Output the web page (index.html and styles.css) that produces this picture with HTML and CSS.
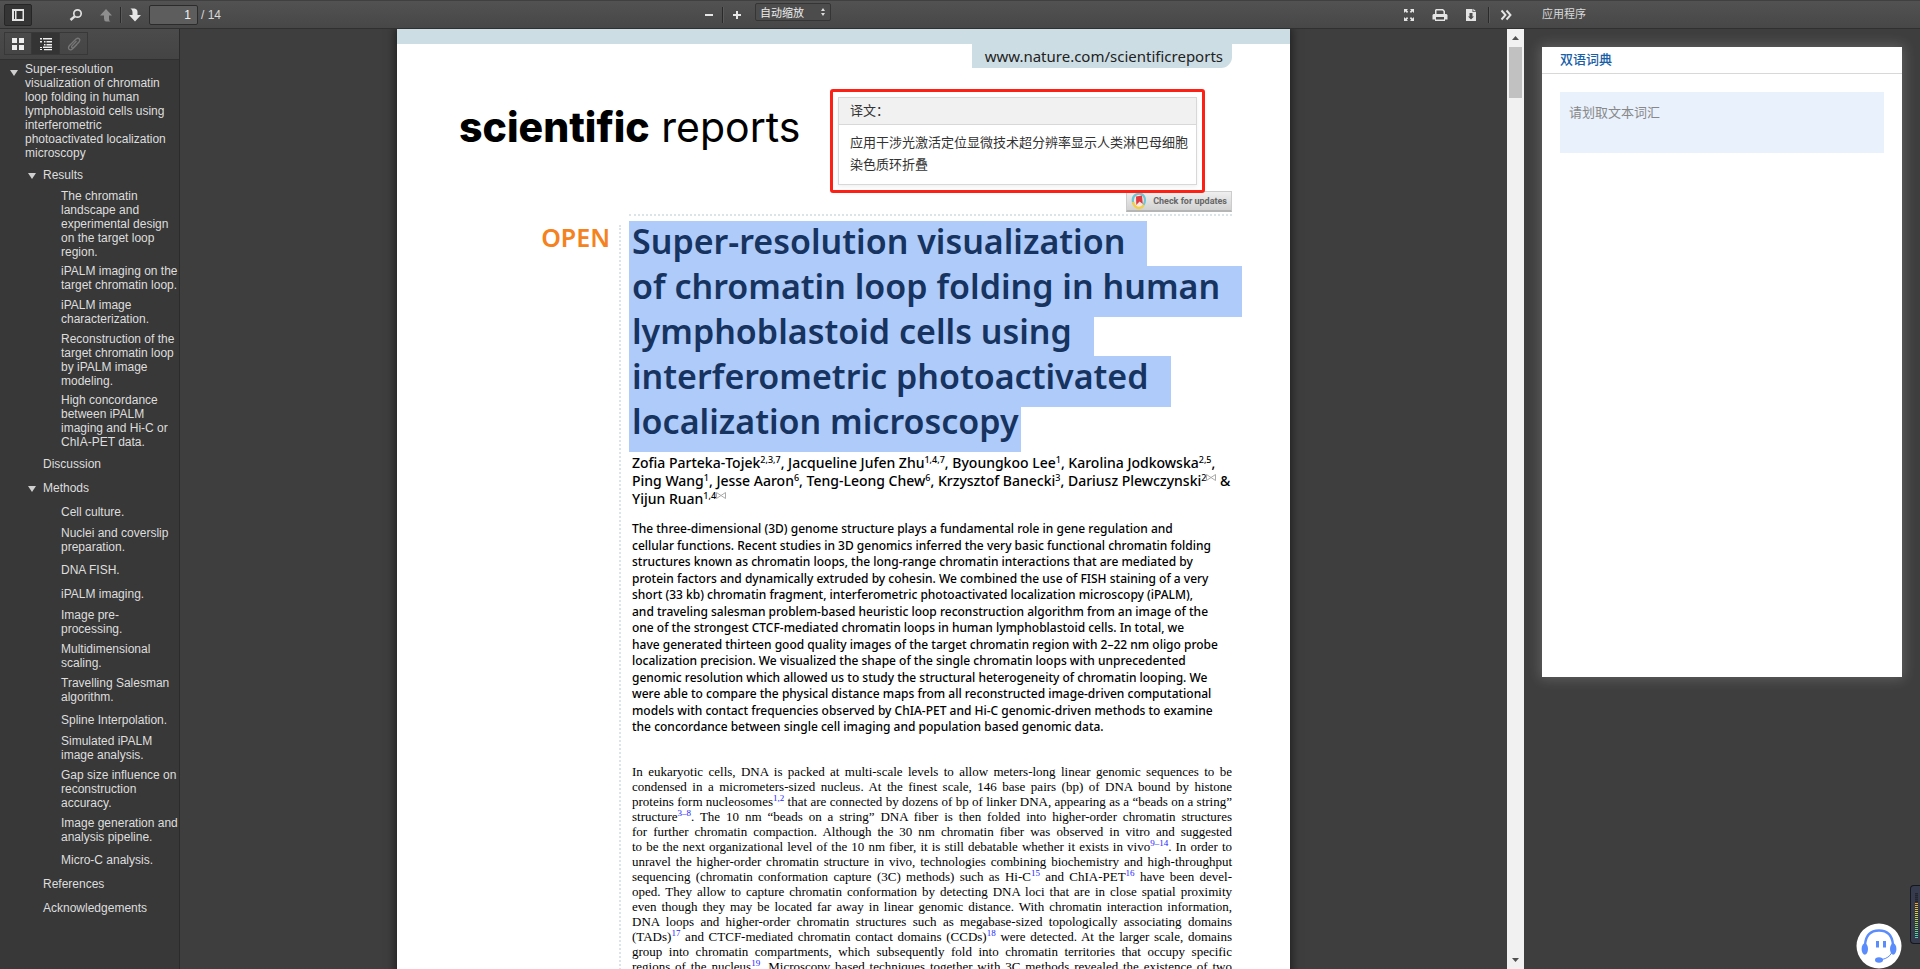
FILE: index.html
```html
<!DOCTYPE html>
<html lang="zh-CN">
<head>
<meta charset="utf-8">
<title>Super-resolution visualization of chromatin loop folding</title>
<link rel="stylesheet" href="styles.css">
</head>
<body>
<div class="app">
  <div class="reader">
    <header class="toolbar">
      <div class="group">
        <button class="btn btn-toggled" aria-label="Toggle sidebar"><svg width="14" height="14" viewBox="0 0 14 14"><path fill="#e4e4e4" fill-rule="evenodd" d="M1 1h12v12H1zM3 3v8h1V3zM5.500 3v8H11.500V3z"/></svg></button>
        <button class="btn btn-find" aria-label="Find"><svg width="14" height="14" viewBox="0 0 14 14"><circle cx="8.500" cy="5.500" r="3.700" fill="none" stroke="#e0e0e0" stroke-width="1.700"/><path d="M5.700 8.300L1.500 12" stroke="#e0e0e0" stroke-width="2.400"/></svg></button>
        <button class="btn" aria-label="Previous page"><svg width="14" height="14" viewBox="0 0 14 14"><path fill="#8e8e8e" d="M7 1l6 6.500H10V11q0 2 1.500 2.500H7Q5 13 5 10.500V7.500H1z"/></svg></button>
        <span class="sep"></span>
        <button class="btn" aria-label="Next page"><svg width="14" height="14" viewBox="0 0 14 14"><path fill="#e6e6e6" d="M7 13.500L1 7H4.500V4Q4.500 1.500 2.500 .5H6.500Q9.500 1 9.500 4V7H13z"/></svg></button>
        <label class="pages"><input class="page-input" type="text" value="1" aria-label="Page"> <span>/ 14</span></label>
      </div>
      <div class="group group-mid">
        <button class="btn btn-zoom" aria-label="Zoom out"><svg width="10" height="10" viewBox="0 0 10 10"><path fill="#e6e6e6" d="M1 4h8v2H1z"/></svg></button>
        <span class="sep"></span>
        <button class="btn btn-zoom" aria-label="Zoom in"><svg width="10" height="10" viewBox="0 0 10 10"><path fill="#e6e6e6" d="M1 4h3V1h2v3h3v2H6v3H4V6H1z"/></svg></button>
        <div class="select-wrap">
          <select class="scale" aria-label="Zoom"><option>自动缩放</option></select>
          <svg class="scale-arrow" width="6" height="10" viewBox="0 0 6 10"><path fill="#ddd" d="M3 1l2 3H1zM3 9L1 6h4z"/></svg>
        </div>
      </div>
      <div class="group group-end">
        <button class="btn" aria-label="Full screen"><svg width="12" height="14" viewBox="0 0 12 14"><path fill="#e4e4e4" d="M1 1h4L3.800 2.300 5.200 3.700 4 5 2.500 3.500 1 5zM11 1v4L9.500 3.500 8 5 6.800 3.700 8.200 2.300 7 1zM1 13V9l1.500 1.500L4 9l1.200 1.300L3.800 11.700 5 13zM11 13H7l1.200-1.300-1.400-1.400L8 9l1.500 1.500L11 9z"/></svg></button>
        <button class="btn" aria-label="Print"><svg width="16" height="14" viewBox="0 0 16 14"><path fill="#e4e4e4" fill-rule="evenodd" d="M4 1h7l2 2v3h1.500l1 1v4.500H13V13H3v-1.500H.5V7l1-1H3V2zM4.500 2.500V6h7V3.500l-1-1zM4 9v2.500h8V9z"/></svg></button>
        <button class="btn" aria-label="Download"><svg width="12" height="14" viewBox="0 0 12 14"><path fill="#e4e4e4" fill-rule="evenodd" d="M1 1h6.500v3H11v9H1zM4.500 5v3.500H3L6 11.500 9 8.500H7.500V5z"/><path fill="#e4e4e4" d="M8.300 .8L11 3.300H8.300z"/></svg></button>
        <span class="sep"></span>
        <button class="btn" aria-label="Tools"><svg width="13" height="12" viewBox="0 0 13 12"><path fill="none" stroke="#e4e4e4" stroke-width="1.900" d="M1.500 1.500L5.500 6l-4 4.500M6.500 1.500l4 4.500-4 4.500"/></svg></button>
      </div>
    </header>

    <div class="workspace">
      <aside class="sidebar">
        <div class="side-tools">
          <button class="tab" aria-label="Thumbnails"><svg width="14" height="14" viewBox="0 0 14 14"><path fill="#eee" d="M1 1h5v5H1zM8 1h5v5H8zM1 8h5v5H1zM8 8h5v5H8z"/></svg></button>
          <button class="tab tab-on" aria-label="Outline"><svg width="14" height="14" viewBox="0 0 14 14"><path fill="#eee" d="M1 1h2v1.500H1zM4 1h9v1.500H4zM1 4h2v1.500H1zM5 4h1.500v1.500H5zM7.500 4H13v1.500H7.500zM5 7h1.500v1.500H5zM7.500 7H13v1.500H7.500zM1 10h2v1H1zM4 9.500h9V11H4zM1 12h2v1H1zM5 12h8v1.200H5z"/></svg></button>
          <button class="tab" aria-label="Attachments"><svg width="14" height="14" viewBox="0 0 14 14"><path fill="none" stroke="#777" stroke-width="1.300" d="M9.500 4L5 8.800q-1 1.400.2 2 .9.300 1.700-.6L12 5q1.500-2 .2-3.200T9 2L2.500 8.500q-1.800 2.300-.4 3.800 1.600 1.300 3.600-.6L10 7.500"/></svg></button>
        </div>
        <nav class="outline">
          <ul class="tree">
            <li><a class="node long open" href="#">Super-resolution<br>visualization of chromatin<br>loop folding in human<br>lymphoblastoid cells using<br>interferometric<br>photoactivated localization<br>microscopy</a>
              <ul>
                <li><a class="node one open" href="#">Results</a>
                  <ul>
                    <li><a class="node long" href="#">The chromatin<br>landscape and<br>experimental design<br>on the target loop<br>region.</a></li>
                    <li><a class="node" href="#">iPALM imaging on the<br>target chromatin loop.</a></li>
                    <li><a class="node" href="#">iPALM image<br>characterization.</a></li>
                    <li><a class="node long" href="#">Reconstruction of the<br>target chromatin loop<br>by iPALM image<br>modeling.</a></li>
                    <li><a class="node long" href="#">High concordance<br>between iPALM<br>imaging and Hi-C or<br>ChIA-PET data.</a></li>
                  </ul>
                </li>
                <li><a class="node one" href="#">Discussion</a></li>
                <li><a class="node one open" href="#">Methods</a>
                  <ul>
                    <li><a class="node one" href="#">Cell culture.</a></li>
                    <li><a class="node" href="#">Nuclei and coverslip<br>preparation.</a></li>
                    <li><a class="node one" href="#">DNA FISH.</a></li>
                    <li><a class="node one" href="#">iPALM imaging.</a></li>
                    <li><a class="node" href="#">Image pre-<br>processing.</a></li>
                    <li><a class="node" href="#">Multidimensional<br>scaling.</a></li>
                    <li><a class="node" href="#">Travelling Salesman<br>algorithm.</a></li>
                    <li><a class="node one" href="#">Spline Interpolation.</a></li>
                    <li><a class="node" href="#">Simulated iPALM<br>image analysis.</a></li>
                    <li><a class="node" href="#">Gap size influence on<br>reconstruction<br>accuracy.</a></li>
                    <li><a class="node" href="#">Image generation and<br>analysis pipeline.</a></li>
                    <li><a class="node one" href="#">Micro-C analysis.</a></li>
                  </ul>
                </li>
                <li><a class="node one" href="#">References</a></li>
                <li><a class="node one" href="#">Acknowledgements</a></li>
              </ul>
            </li>
          </ul>
        </nav>
      </aside>

      <main class="viewer">
        <article class="page" lang="en">
          <div class="band"></div>
          <div class="site"><a href="#">www.nature.com/scientificreports</a></div>
          <div class="brand"><b>scientific</b> reports</div>
          <div class="badge-row">
            <button class="badge"><svg width="16" height="18" viewBox="0 0 16 18"><ellipse cx="8" cy="9" rx="6.300" ry="7.300" fill="#f6e7e2"/><path fill="none" stroke="#6cc6d6" stroke-width="2.200" d="M2.300 11.500Q.5 5 5 2.500q6-2.500 8.500 3 1.200 4-1 7.500"/><path fill="none" stroke="#f3cf45" stroke-width="2.400" d="M2 10q1.500 6 6 6 3 0 4.800-3"/><path fill="#e0383e" d="M5 4.500l6-1 .8 8.500L8.500 9.500 5.300 13z"/></svg>Check for updates</button>
          </div>
          <div class="columns">
            <div class="access">OPEN</div>
            <div class="text">
              <h1 class="title"><span>Super-resolution visualization</span><span>of chromatin loop folding in human</span><span>lymphoblastoid cells using</span><span>interferometric photoactivated</span><span>localization microscopy</span></h1>
              <p class="authors">Zofia Parteka‑Tojek<sup>2,3,7</sup>, Jacqueline Jufen Zhu<sup>1,4,7</sup>, Byoungkoo Lee<sup>1</sup>, Karolina Jodkowska<sup>2,5</sup>,<br>Ping Wang<sup>1</sup>, Jesse Aaron<sup>6</sup>, Teng‑Leong Chew<sup>6</sup>, Krzysztof Banecki<sup>3</sup>, Dariusz Plewczynski<sup>2</sup><svg class="mail" width="10" height="7" viewBox="0 0 10 7"><path fill="none" stroke="#aaa" d="M.5.5v6L5 3.500 9.500.5v6L5 3.500z"/></svg> &amp;<br>Yijun Ruan<sup>1,4</sup><svg class="mail" width="10" height="7" viewBox="0 0 10 7"><path fill="none" stroke="#aaa" d="M.5.5v6L5 3.500 9.500.5v6L5 3.500z"/></svg></p>
              <p class="abstract"><span>The three‑dimensional (3D) genome structure plays a fundamental role in gene regulation and</span><span>cellular functions. Recent studies in 3D genomics inferred the very basic functional chromatin folding</span><span>structures known as chromatin loops, the long‑range chromatin interactions that are mediated by</span><span>protein factors and dynamically extruded by cohesin. We combined the use of FISH staining of a very</span><span>short (33 kb) chromatin fragment, interferometric photoactivated localization microscopy (iPALM),</span><span>and traveling salesman problem‑based heuristic loop reconstruction algorithm from an image of the</span><span>one of the strongest CTCF‑mediated chromatin loops in human lymphoblastoid cells. In total, we</span><span>have generated thirteen good quality images of the target chromatin region with 2–22 nm oligo probe</span><span>localization precision. We visualized the shape of the single chromatin loops with unprecedented</span><span>genomic resolution which allowed us to study the structural heterogeneity of chromatin looping. We</span><span>were able to compare the physical distance maps from all reconstructed image‑driven computational</span><span>models with contact frequencies observed by ChIA‑PET and Hi‑C genomic‑driven methods to examine</span><span>the concordance between single cell imaging and population based genomic data.</span></p>
              <p class="body">In eukaryotic cells, DNA is packed at multi-scale levels to allow meters-long linear genomic sequences to be<br>condensed in a micrometers-sized nucleus. At the finest scale, 146 base pairs (bp) of DNA bound by histone<br>proteins form nucleosomes<sup>1,2</sup> that are connected by dozens of bp of linker DNA, appearing as a “beads on a string”<br>structure<sup>3–8</sup>. The 10 nm “beads on a string” DNA fiber is then folded into higher-order chromatin structures<br>for further chromatin compaction. Although the 30 nm chromatin fiber was observed in vitro and suggested<br>to be the next organizational level of the 10 nm fiber, it is still debatable whether it exists in vivo<sup>9–14</sup>. In order to<br>unravel the higher-order chromatin structure in vivo, technologies combining biochemistry and high-throughput<br>sequencing (chromatin conformation capture (3C) methods) such as Hi-C<sup>15</sup> and ChIA-PET<sup>16</sup> have been devel-<br>oped. They allow to capture chromatin conformation by detecting DNA loci that are in close spatial proximity<br>even though they may be located far away in linear genomic distance. With chromatin interaction information,<br>DNA loops and higher-order chromatin structures such as megabase-sized topologically associating domains<br>(TADs)<sup>17</sup> and CTCF-mediated chromatin contact domains (CCDs)<sup>18</sup> were detected. At the larger scale, domains<br>group into chromatin compartments, which subsequently fold into chromatin territories that occupy specific<br>regions of the nucleus<sup>19</sup>. Microscopy based techniques together with 3C methods revealed the existence of two</p>
            </div>
          </div>
          <section class="translation" lang="zh-CN">
            <div class="translation-card">
              <h2>译文：</h2>
              <p>应用干涉光激活定位显微技术超分辨率显示人类淋巴母细胞<br>染色质环折叠</p>
            </div>
          </section>
        </article>
        <div class="scrollbar">
          <svg width="17" height="18" viewBox="0 0 17 18"><path fill="#505050" d="M5 11h7L8.500 7z"/></svg>
          <div class="thumb"></div>
          <svg class="down" width="17" height="18" viewBox="0 0 17 18"><path fill="#505050" d="M5 7h7l-3.500 4z"/></svg>
        </div>
      </main>
    </div>
  </div>

  <aside class="tools">
    <header class="tools-head">应用程序</header>
    <section class="card">
      <h2>双语词典</h2>
      <div class="hint">请划取文本词汇</div>
    </section>
  </aside>
</div>

<button class="chat" aria-label="Support"><svg width="46" height="46" viewBox="0 0 46 46"><circle cx="23" cy="23" r="22.500" fill="#fff"/><path fill="none" stroke="#5b8cfb" stroke-width="2.400" d="M9 22Q10 7.500 23 7.500T37 22"/><ellipse cx="8.800" cy="26" rx="3.200" ry="5.800" fill="#5b8cfb"/><ellipse cx="37.200" cy="26" rx="3.200" ry="5.800" fill="#5b8cfb"/><path fill="#5b8cfb" d="M20 18h3v6.500h-3zM27 18h3v6.500h-3z"/><ellipse cx="23" cy="37" rx="4" ry="2.700" fill="#5b8cfb"/><path fill="none" stroke="#5b8cfb" d="M26 36.500Q33 35 35.500 30"/></svg></button>
<div class="meter"><div class="level"></div></div>
</body>
</html>
```
FILE: styles.css
```css
* { box-sizing: border-box; }
body {
  margin: 0;
  height: 100vh;
  overflow: hidden;
  background: #3e3e3e;
  font-family: "Liberation Sans", "Noto Sans CJK SC", sans-serif;
}
h1, h2, p, ul { margin: 0; padding: 0; }
button { margin: 0; padding: 0; border: 0; background: none; font: inherit; color: inherit; }
a { color: inherit; text-decoration: none; }
svg { display: block; flex: none; }

.app { display: flex; height: 100vh; }
.reader { flex: 1; min-width: 0; display: flex; flex-direction: column; }

/* top bar */
.toolbar {
  display: grid;
  grid-template-columns: 1fr auto 1fr;
  height: 29px;
  background: linear-gradient(#525252, #474747);
  border-top: 1px solid #404040;
  border-bottom: 1px solid #303030;
  position: relative;
}
.group { display: flex; align-items: center; padding-left: 4px; }
.group-mid { padding-left: 2px; }
.group-end { justify-content: flex-end; padding: 0 4px 0 0; gap: 3px; }
.btn { display: flex; align-items: center; justify-content: center; width: 28px; height: 22px; }
.btn-zoom { width: 27px; }
.btn-toggled { background: #353535; border: 1px solid #262626; border-radius: 2px; }
.btn-find { margin: 0 2px 0 30px; }
.sep { width: 1px; height: 16px; background: #2a2a2a; box-shadow: 1px 0 #5a5a5a; }
.pages { display: flex; align-items: center; gap: 3px; color: #d9d9d9; font: 12px "Liberation Sans", sans-serif; }
.page-input {
  width: 49px; height: 20px;
  padding: 0 6px;
  border: 1px solid #2b2b2b;
  border-radius: 2px;
  background: #5d5d5d;
  color: #f2f2f2;
  font: 12px "Liberation Sans", sans-serif;
  text-align: right;
}
.select-wrap { display: grid; align-items: center; margin: 0 0 6px 5px; }
.scale, .scale-arrow { grid-area: 1 / 1; }
.scale {
  appearance: none;
  width: 76px; height: 18px;
  padding: 0 4px;
  border: 1px solid #353535;
  border-radius: 2px;
  background: #4c4c4c;
  color: #ececec;
  font: 11px/16px "Noto Sans CJK SC", sans-serif;
}
.scale-arrow { justify-self: end; margin-right: 5px; pointer-events: none; }

/* outline */
.workspace { flex: 1; min-height: 0; display: flex; }
.sidebar { width: 180px; flex: none; background: #383838; border-right: 1px solid #2b2b2b; overflow: hidden; }
.side-tools {
  display: flex;
  height: 31px;
  padding: 3px 4px;
  background: linear-gradient(#4b4b4b, #444);
  border-bottom: 1px solid #303030;
}
.tab { display: flex; align-items: center; justify-content: center; width: 28px; height: 23px; border: 1px solid #383838; }
.tab + .tab { border-left: 0; }
.tab-on { background: #343434; }
.outline { padding: 2px 0 0 8px; color: #dedede; font-size: 12px; line-height: 14px; white-space: nowrap; }
.outline ul { list-style: none; padding-left: 18px; }
.outline .tree { padding-left: 17px; }
.node { display: block; padding-bottom: 6px; position: relative; }
.node.long { padding-bottom: 5px; }
.node.one { padding: 3px 0 7px; }
.node.open::before {
  content: "";
  position: absolute;
  left: -15px; top: 8px;
  border: 4px solid transparent;
  border-top: 6px solid #cfcfcf;
  border-bottom: 0;
}

/* document */
.viewer { flex: 1; min-width: 0; display: flex; overflow: hidden; }
.page {
  flex: 0 1 893px;
  min-width: 0;
  margin: 0 auto;
  background: #fff;
  color: #000;
  position: relative;
  height: max-content;
  min-height: 100%;
  box-shadow: 0 0 9px 2px rgba(0, 0, 0, .5);
}
.band { height: 15px; background: #cddde4; }
.site { display: flex; justify-content: flex-end; padding-right: 58px; }
.site a {
  padding: 0 9px 0 13px;
  background: #cddde4;
  border-bottom-right-radius: 11px;
  color: #222;
  font: 15px/24px "Noto Sans", sans-serif;
}
.brand { padding: 35px 0 0 62px; font: 400 41px/48px Inter, sans-serif; }
.brand b { font-weight: 800; }
.badge-row { display: flex; justify-content: flex-end; padding: 40px 58px 0 0; }
.badge {
  display: flex; align-items: center; gap: 6px;
  height: 21px;
  padding: 0 4px;
  background: linear-gradient(#efefef, #d2d2d2);
  border: 1px solid #ccc;
  border-bottom: 2px solid #b5b5b5;
  color: #666;
  font: 700 9px Roboto, sans-serif;
}
.columns { display: flex; padding: 2px 58px 0 0; }
.access {
  flex: none;
  width: 224px;
  margin-top: 11px;
  padding-right: 9px;
  border-right: 2px dotted #dbe4e8;
  color: #f58220;
  font: 600 25px/24px "Noto Sans", sans-serif;
  text-align: right;
}
.text { flex: 1; min-width: 0; margin-left: 8px; }
.title {
  padding-top: 5px;
  border-top: 2px dotted #dbe4e8;
  color: #17335f;
  font: 600 34px/41px "Noto Sans", sans-serif;
  white-space: nowrap;
}
.title span { display: block; width: fit-content; margin-bottom: -6px; padding: 0 22px 10px 3px; background: #aecbfa; }
.title span:last-child { padding-right: 2px; }
.authors, .abstract, .body { margin-left: 3px; white-space: nowrap; }
.authors { margin-top: 8px; font: 500 14px/18px "Noto Sans", sans-serif; }
sup { font-size: 9px; line-height: 0; vertical-align: 5px; }
.mail { display: inline; vertical-align: 5px; }
.abstract {
  display: flex; flex-direction: column; justify-content: space-between;
  min-height: 214px;
  margin-top: 13px;
  font: 500 12px/16px "Noto Sans", sans-serif;
}
.body {
  margin-top: 29px;
  font: 13px/15px "Liberation Serif", serif;
  text-align: justify;
  text-align-last: justify;
  white-space: normal;
}
.body sup { color: #22f; }

/* translation popup */
.translation {
  position: absolute;
  left: 433px; top: 60px;
  width: 375px;
  padding: 5px;
  border: 3px solid #fe2014;
  border-radius: 3px;
  background: #fff;
  color: #333;
}
.translation-card { border: 1px solid #d8d8d8; box-shadow: 0 2px 4px rgba(0, 0, 0, .06); font: 13px/22px "Noto Sans CJK SC", sans-serif; }
.translation h2 { padding: 1px 11px 3px; background: #f1f1f1; border-bottom: 1px solid #d8d8d8; font: inherit; }
.translation p { padding: 6px 11px 9px; white-space: nowrap; }

/* scrollbar */
.scrollbar { width: 17px; flex: none; display: flex; flex-direction: column; align-items: center; background: #f1f1f1; }
.thumb { width: 13px; height: 51px; background: #c1c1c1; }
.down { margin-top: auto; }

/* right panel */
.tools { width: 396px; flex: none; }
.tools-head {
  height: 29px;
  padding-left: 18px;
  background: linear-gradient(#525252, #474747);
  border-top: 1px solid #404040;
  border-bottom: 1px solid #303030;
  color: #d9d9d9;
  font: 11px/25px "Noto Sans CJK SC", sans-serif;
}
.card { margin: 18px; height: 65vh; background: #fff; box-shadow: 0 0 12px 2px rgba(255, 255, 255, .18); overflow: hidden; }
.card h2 { padding: 0 18px 3px; border-bottom: 1px solid #d8d8d8; color: #1760a8; font: 500 13px/23px "Noto Sans CJK SC", sans-serif; }
.hint { margin: 18px 18px 0; height: 61px; padding: 10px 9px; background: #e9f1fd; color: #888; font: 13px/20px "Noto Sans CJK SC", sans-serif; }

.chat { position: fixed; right: 18px; bottom: 0; }
.meter { position: fixed; right: 0; bottom: 25px; width: 10px; height: 59px; padding: 7px 2px 7px 4px; border: 1px solid #15171f; border-right: 0; border-radius: 4px 0 0 4px; background: #363c4e; }
.level {
  height: 45px;
  background:
    repeating-linear-gradient(transparent 0 1px, #2c3140 1px 2px),
    linear-gradient(#23262f 0 10px, #f0a030 10px, #e3cf3a 20px, #9ed04e 30px, #3fd6b8);
}
```
